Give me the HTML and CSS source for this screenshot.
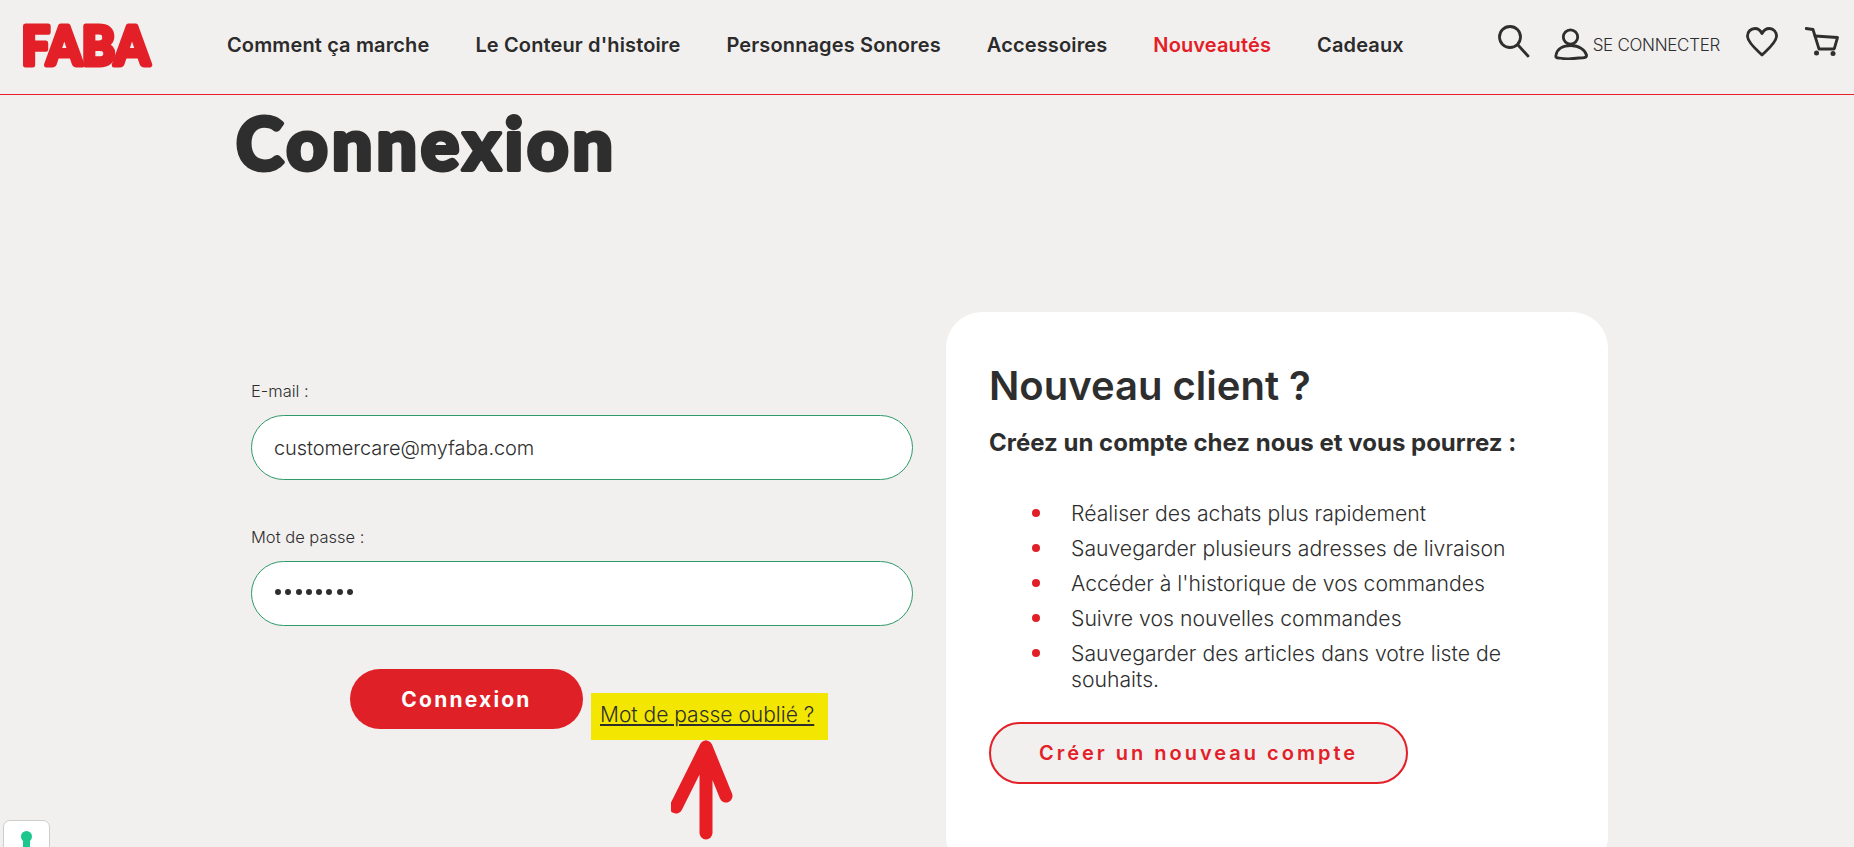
FILE: index.html
```html
<!DOCTYPE html>
<html lang="fr">
<head>
    <meta charset="UTF-8">
    <title>Connexion - FABA</title>
    <link rel="stylesheet" href="styles.css">
</head>
<body>
    <header class="header">
        <a href="#" class="logo">
            <svg width="135" height="60" viewBox="0 0 135 60">
                <text x="0.5" y="50" textLength="128" lengthAdjust="spacingAndGlyphs">FABA</text>
            </svg>
        </a>
        <nav class="nav">
            <a href="#">Comment ça marche</a>
            <a href="#">Le Conteur d'histoire</a>
            <a href="#">Personnages Sonores</a>
            <a href="#">Accessoires</a>
            <a href="#" class="nav-new">Nouveautés</a>
            <a href="#">Cadeaux</a>
        </nav>
        <div class="header-tools">
            <svg class="icon icon-search" width="32" height="34" viewBox="0 0 32 34">
                <circle cx="12" cy="12" r="10.5"/>
                <path d="M20 20 L30 31"/>
            </svg>
            <a href="#" class="account">
                <svg class="icon" width="34" height="32" viewBox="0 0 34 32">
                    <circle cx="16.5" cy="9" r="7.2"/>
                    <path d="M2 27 C3 21 9 17.5 17 17.5 C25 17.5 31 22 32.5 27 C33 30 29 30 25 30 C18 31 10 31 5 30 C2 30 1.5 29 2 27 Z"/>
                </svg>
                <span>SE CONNECTER</span>
            </a>
            <svg class="icon icon-heart" width="32" height="30" viewBox="0 0 32 30">
                <path d="M16 28 C11 23 2 16 1.5 9.5 C1.2 4.5 5 1.5 9 1.5 C12 1.5 14.5 3.5 16 6.5 C17.5 3.5 20 1.5 23.5 1.5 C27.5 1.5 30.8 5 30.5 9.5 C30 16 21 23 16 28 Z"/>
            </svg>
            <svg class="icon icon-cart" width="34" height="30" viewBox="0 0 34 30">
                <path d="M1 1.5 L8 2.5 L14 22 L29 22"/>
                <path d="M10 9 L32.5 10.5 L29.5 21"/>
                <circle class="wheel" cx="11.5" cy="26" r="2.5"/>
                <circle class="wheel" cx="28" cy="26.5" r="2.5"/>
            </svg>
        </div>
    </header>

    <main class="page">
        <h1 class="page-title">
            <svg width="400" height="90" viewBox="0 0 400 90">
                <text x="1" y="75" textLength="377" lengthAdjust="spacing">Connexion</text>
            </svg>
        </h1>

        <div class="login-row">
            <form class="login-form">
                <label for="email">E-mail :</label>
                <input id="email" type="text" value="customercare@myfaba.com">

                <label for="password">Mot de passe :</label>
                <div id="password" class="password-field">
                    <span class="dot"></span><span class="dot"></span><span class="dot"></span><span class="dot"></span><span class="dot"></span><span class="dot"></span><span class="dot"></span><span class="dot"></span>
                </div>

                <div class="form-actions">
                    <button type="button" class="btn-login">Connexion</button>
                    <a href="#" class="forgot">Mot de passe oublié ?</a>
                </div>
            </form>

            <section class="new-client">
                <h2>Nouveau client ?</h2>
                <h3>Créez un compte chez nous et vous pourrez :</h3>
                <ul>
                    <li>Réaliser des achats plus rapidement</li>
                    <li>Sauvegarder plusieurs adresses de livraison</li>
                    <li>Accéder à l'historique de vos commandes</li>
                    <li>Suivre vos nouvelles commandes</li>
                    <li>Sauvegarder des articles dans votre liste de souhaits.</li>
                </ul>
                <a href="#" class="btn-create">Créer un nouveau compte</a>
            </section>
        </div>
    </main>

    <!-- annotation arrow pointing at the forgot link -->
    <svg class="arrow" width="70" height="110" viewBox="0 0 70 110">
        <path d="M35 7 L35 93 M35 7 L5 67 M35 7 L55 56"/>
    </svg>

    <div class="privacy-badge"><span class="keyhole"></span></div>
</body>
</html>
```

FILE: styles.css
```css
* {
    margin: 0;
    padding: 0;
    box-sizing: border-box;
}

html, body {
    height: 100%;
    overflow: hidden;
}

body {
    font-family: 'Inter', 'Noto Sans', sans-serif;
    background: #f2f0ef;
    color: #2e2e2e;
}

a {
    color: inherit;
    text-decoration: none;
}

.header {
    display: flex;
    align-items: center;
    height: 95px;
    padding: 0 15px 5px 21px;
    border-bottom: 1px solid #e8202a;
}

.logo {
    display: block;
    width: 206px;
}

.logo svg {
    display: block;
    overflow: visible;
}

.logo text {
    font-family: 'Lato', sans-serif;
    font-weight: 900;
    font-size: 54px;
    fill: #e32028;
    stroke: #e32028;
    stroke-width: 5;
    stroke-linejoin: round;
}

.nav {
    display: flex;
    gap: 46px;
    font-size: 20px;
    font-weight: 600;
    letter-spacing: 0.13px;
    color: #2b2b2b;
}

.nav-new {
    color: #e32028;
}

.header-tools {
    display: flex;
    align-items: center;
    margin-left: auto;
    margin-top: -2px;
}

.icon {
    display: block;
    fill: none;
    stroke: #2e2e2e;
    stroke-width: 2.8;
    stroke-linecap: round;
    stroke-linejoin: round;
}

.icon .wheel {
    fill: #2e2e2e;
    stroke: none;
}

.icon-search {
    margin-top: -3px;
}

.account {
    display: flex;
    align-items: center;
    gap: 5px;
    margin-left: 24px;
    font-size: 17px;
    font-weight: 300;
    letter-spacing: -0.3px;
    color: #2e2e2e;
}

.account span {
    margin-top: 2px;
}

.icon-heart {
    margin-left: 26px;
    margin-top: -4px;
}

.icon-cart {
    margin-left: 27px;
    margin-top: -3px;
}

.page {
    padding-left: 235px;
}

.page-title {
    height: 90px;
    margin-bottom: 127px;
}

.page-title svg {
    display: block;
    overflow: visible;
}

.page-title text {
    font-family: 'Lato', sans-serif;
    font-weight: 900;
    font-size: 72px;
    fill: #2e2e2e;
    stroke: #2e2e2e;
    stroke-width: 4;
    stroke-linejoin: round;
}

.login-row {
    display: flex;
    gap: 33px;
    align-items: flex-start;
}

.login-form {
    width: 662px;
    margin-left: 16px;
    padding-top: 68px;
}

.login-form label {
    display: block;
    font-size: 16.5px;
    font-weight: 300;
    line-height: 22px;
    margin-bottom: 13px;
}

.login-form input,
.password-field {
    display: block;
    width: 100%;
    height: 65px;
    padding: 0 22px;
    border: 1px solid #2e9a68;
    border-radius: 33px;
    background: #fff;
    font-family: inherit;
    font-size: 20px;
    font-weight: 300;
    letter-spacing: -0.1px;
    color: #2e2e2e;
    margin-bottom: 46px;
}

.password-field {
    display: flex;
    align-items: center;
    gap: 4.3px;
    padding: 0 22px 4px 23px;
    margin-bottom: 43px;
}

.dot {
    width: 6px;
    height: 6px;
    border-radius: 50%;
    background: #2e2e2e;
}

.form-actions {
    display: flex;
    align-items: flex-start;
    padding-left: 99px;
}

.btn-login {
    width: 233px;
    height: 60px;
    border: none;
    border-radius: 30px;
    background: #e02027;
    color: #fff;
    font-family: inherit;
    font-size: 21px;
    font-weight: 700;
    letter-spacing: 2.2px;
    cursor: pointer;
}

.forgot {
    margin: 24px 0 0 8px;
    padding: 6px 14px 10px 9px;
    background: #f3e600;
    font-size: 21px;
    font-weight: 300;
    line-height: 31px;
    text-decoration: underline;
    color: #2e2e2e;
    white-space: nowrap;
}

.new-client {
    width: 662px;
    height: 560px;
    padding: 49px 43px;
    border-radius: 36px;
    background: #fff;
}

.new-client h2 {
    font-size: 40px;
    font-weight: 600;
    line-height: 50px;
    margin-bottom: 17px;
}

.new-client h3 {
    font-size: 24px;
    font-weight: 700;
    line-height: 30px;
}

.new-client ul {
    list-style: none;
    margin: 42px 0 30px 82px;
}

.new-client li {
    position: relative;
    font-size: 21.2px;
    font-weight: 300;
    line-height: 26px;
    margin-bottom: 9px;
}

.new-client li::before {
    content: "";
    position: absolute;
    left: -39px;
    top: 9px;
    width: 8px;
    height: 8px;
    border-radius: 50%;
    background: #e02027;
}

.btn-create {
    display: flex;
    align-items: center;
    justify-content: center;
    width: 419px;
    height: 62px;
    border: 2px solid #e32028;
    border-radius: 31px;
    background: #f2f0ef;
    color: #e32028;
    font-size: 20px;
    font-weight: 600;
    letter-spacing: 3px;
}

.arrow {
    position: absolute;
    left: 671px;
    top: 740px;
    fill: none;
    stroke: #e81e25;
    stroke-width: 13;
    stroke-linecap: round;
    stroke-linejoin: round;
}

.privacy-badge {
    position: fixed;
    left: 3px;
    top: 820px;
    width: 47px;
    height: 40px;
    background: #fff;
    border: 1px solid #cfcdcb;
    border-radius: 7px;
}

.keyhole {
    position: absolute;
    left: 19px;
    top: 14px;
    width: 7px;
    height: 26px;
    background: #1cc78d;
}

.keyhole::before {
    content: "";
    position: absolute;
    left: -2px;
    top: -4px;
    width: 11px;
    height: 11px;
    border-radius: 50%;
    background: #1cc78d;
}
```
